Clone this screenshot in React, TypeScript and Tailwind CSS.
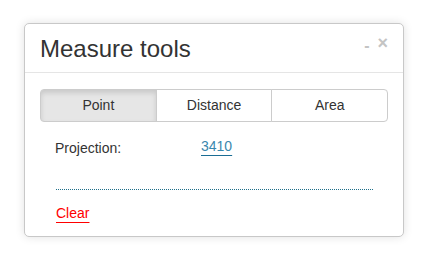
import React, { useState } from "react";

const tabs = ["Point", "Distance", "Area"];

export default function App() {
  const [active, setActive] = useState("Point");

  return (
    <div className="w-[423px] h-[257px] bg-white pl-[24px] pt-[23px]" style={{ fontFamily: '"Liberation Sans", Arial, sans-serif' }}>
      <div className="w-[380px] h-[214px] bg-white border border-[#c8c8c8] rounded-[5px] shadow-[0_0_10px_rgba(0,0,0,0.12)] flex flex-col">
        <div className="h-[49px] border-b border-[#e5e5e5] flex items-start justify-between pl-[15px] pr-[15px]">
          <h1 className="text-[24px] leading-none text-[#333] mt-[13px]">Measure tools</h1>
          <div className="flex items-start gap-[8px] mt-[10px] text-[#c4c4c4] font-bold">
            <span className="text-[16px] leading-none mt-[4px]">-</span>
            <span className="text-[18px] leading-none">×</span>
          </div>
        </div>

        <div className="px-[15px] pt-[16px]">
          <div className="flex h-[33px]">
            {tabs.map((t, i) => (
              <button
                key={t}
                onClick={() => setActive(t)}
                className={`flex-1 text-[14px] text-[#333] border border-[#ccc] ${
                  i === 0 ? "rounded-l-[4px]" : "-ml-px"
                } ${i === tabs.length - 1 ? "rounded-r-[4px]" : ""} ${
                  active === t ? "bg-[#e6e6e6] shadow-[inset_0_3px_5px_rgba(0,0,0,0.125)] border-[#adadad]" : "bg-white"
                }`}
              >
                {t}
              </button>
            ))}
          </div>

          <div className="flex items-center mt-[16px] pl-[15px] text-[14px]">
            <span className="w-[146px] text-[#333]">Projection:</span>
            <a className="relative -top-[2px] text-[#3a87ad] underline underline-offset-[4px] decoration-[#1b6d94]">3410</a>
          </div>

          <div className="mt-[30px] ml-[16px] w-[317px] border-t border-dotted border-[#1d6f8a]" />

          <div className="mt-[13px] ml-[16px] text-[14px]">
            <a className="text-[#f00] underline underline-offset-[4px] decoration-[#f00]">Clear</a>
          </div>
        </div>
      </div>
    </div>
  );
}
